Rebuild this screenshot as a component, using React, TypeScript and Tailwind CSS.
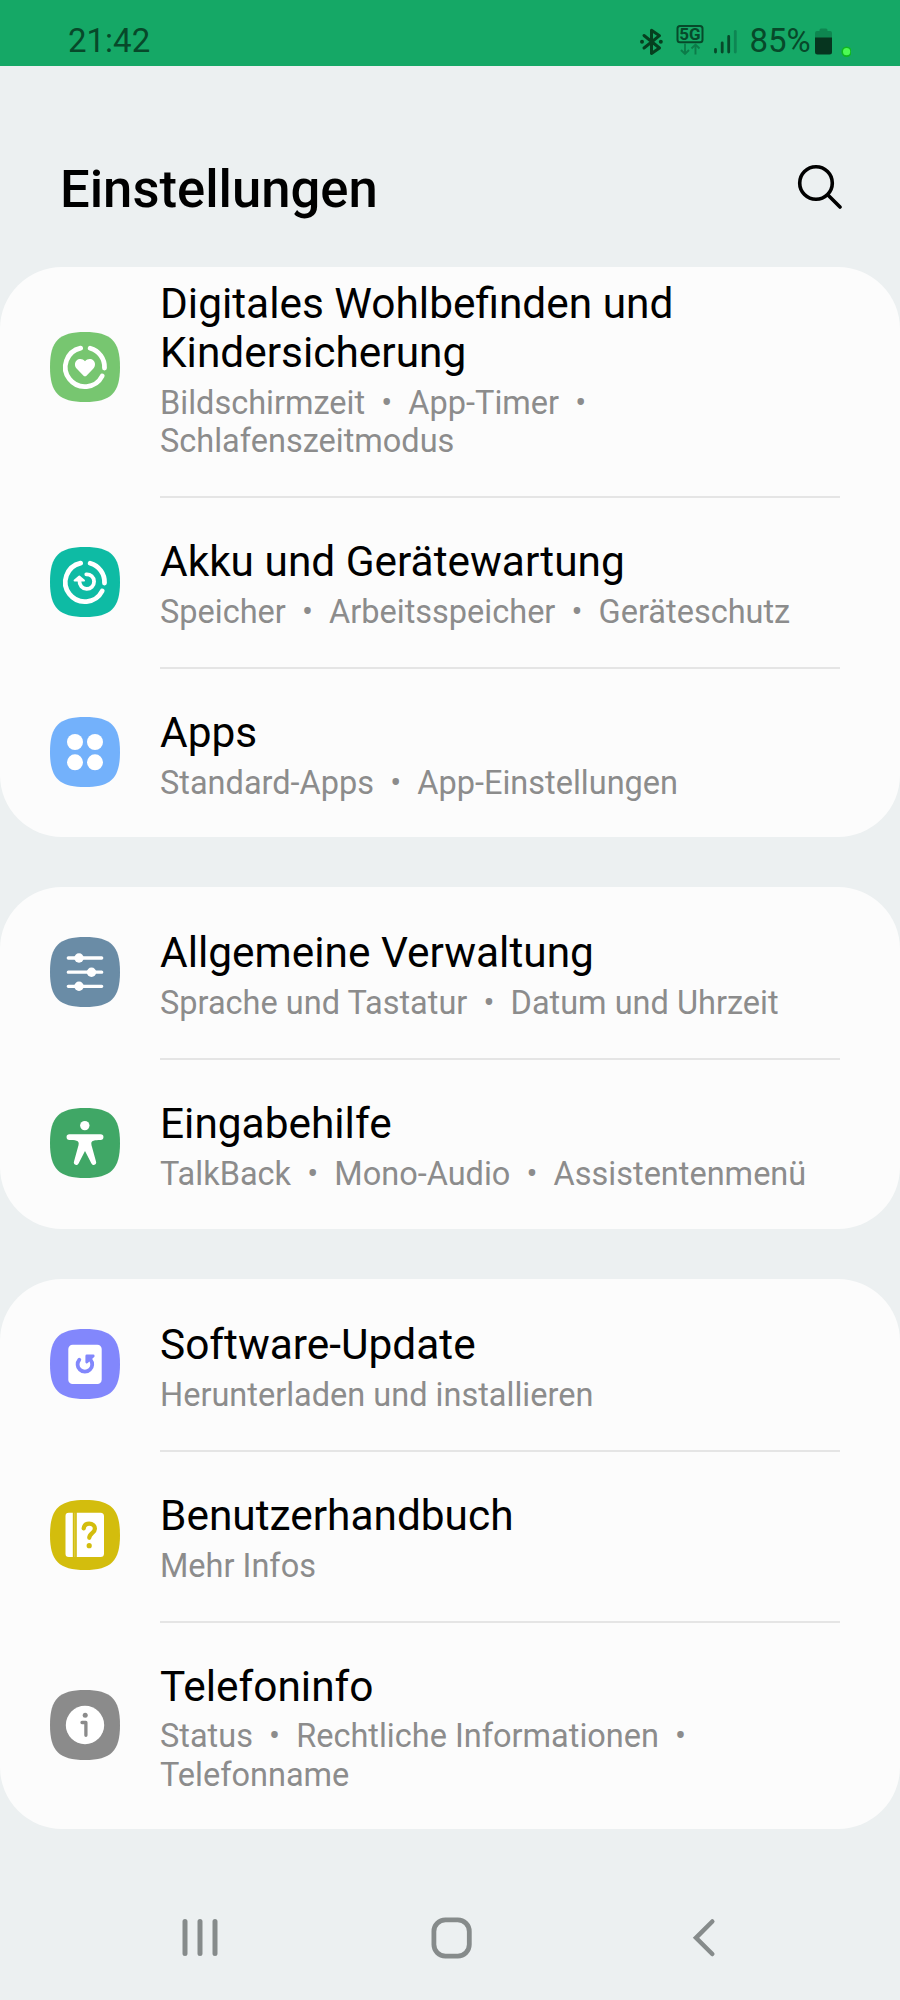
import type { ReactNode } from "react";

type Item = {
  title: string;
  details: string[];
  color: string;
  icon: ReactNode;
};

type Group = {
  className: string;
  items: Item[];
};

const SEPARATOR = "\u00a0\u00a0•\u00a0 ";

const RingIcon = () => (
  <g fill="none" stroke="#fff" strokeWidth="4.8" strokeLinecap="round">
    <path d="M30.6 16.1A19.5 19.5 0 1 0 52.2 44" />
    <path d="M40.2 16.2A19.5 19.5 0 0 1 54.5 36" />
  </g>
);

const groups: Group[] = [
  {
    className: "h-[570px] pt-[12px]",
    items: [
      {
        title: "Digitales Wohlbefinden und Kindersicherung",
        details: ["Bildschirmzeit", "App-Timer", "Schlafenszeitmodus"],
        color: "#77c670",
        icon: (
          <>
            <RingIcon />
            <path
              d="M35 44.3c-.7 0-1.2-.4-1.7-.9l-6.5-6.6c-2.5-2.6-2.3-6.3-.2-8.3 2.3-2.2 6.2-1.9 8.4.8 2.2-2.7 6.1-3 8.4-.8 2.1 2 2.3 5.7-.2 8.3l-6.5 6.6c-.5.5-1 .9-1.7.9z"
              fill="#fff"
            />
          </>
        ),
      },
      {
        title: "Akku und Gerätewartung",
        details: ["Speicher", "Arbeitsspeicher", "Geräteschutz"],
        color: "#0ebba4",
        icon: (
          <>
            <RingIcon />
            <path d="M36.3 27.3A7.3 7.3 0 1 1 29.5 34" fill="none" stroke="#fff" strokeWidth="3.8" strokeLinecap="round" />
            <path d="M29.3 29.5l4.7 4h-9.4z" fill="#fff" stroke="#fff" strokeWidth="2" strokeLinejoin="round" />
          </>
        ),
      },
      {
        title: "Apps",
        details: ["Standard-Apps", "App-Einstellungen"],
        color: "#73b1fb",
        icon: (
          <g fill="#fff">
            <circle cx="25" cy="25" r="8" />
            <circle cx="45" cy="25" r="8" />
            <circle cx="25" cy="45.3" r="8" />
            <circle cx="45" cy="45.3" r="8" />
          </g>
        ),
      },
    ],
  },
  {
    className: "h-[342px] pt-[41px]",
    items: [
      {
        title: "Allgemeine Verwaltung",
        details: ["Sprache und Tastatur", "Datum und Uhrzeit"],
        color: "#6a8ca6",
        icon: (
          <>
            <path d="M18.3 21h33.4M18.3 35.2h33.4M18.3 49.3h33.4" stroke="#fff" strokeWidth="3.3" strokeLinecap="round" />
            <g fill="#fff">
              <circle cx="29" cy="21" r="4.7" />
              <circle cx="41.5" cy="35.2" r="4.7" />
              <circle cx="29" cy="49.3" r="4.7" />
            </g>
          </>
        ),
      },
      {
        title: "Eingabehilfe",
        details: ["TalkBack", "Mono-Audio", "Assistentenmenü"],
        color: "#40a766",
        icon: (
          <g fill="#fff">
            <circle cx="34.8" cy="17.6" r="4.7" />
            <path d="M19.4 26.2h31.2a2.85 2.85 0 0 1 0 5.7c-6 0-9.3.7-9.3 3.3 0 1.3.3 2.5.7 3.8l4 14.6a2.5 2.5 0 0 1-4.7 1.7L35 43l-6.3 12.3a2.5 2.5 0 0 1-4.7-1.7L28 39c.4-1.3.7-2.5.7-3.8 0-2.6-3.3-3.3-9.3-3.3a2.85 2.85 0 0 1 0-5.7z" />
          </g>
        ),
      },
    ],
  },
  {
    className: "h-[550px] pt-[41px]",
    items: [
      {
        title: "Software-Update",
        details: ["Herunterladen und installieren"],
        color: "#8287fc",
        icon: (
          <>
            <rect x="18.3" y="15.7" width="33.4" height="39.3" rx="4.3" fill="#fff" />
            <path d="M29.3 30.7A7.3 7.3 0 1 0 40.5 30.7" fill="none" stroke="#8287fc" strokeWidth="3.8" strokeLinecap="round" />
            <path d="M36.8 33V26.9h6.4z" fill="#8287fc" stroke="#8287fc" strokeWidth="2.8" strokeLinejoin="round" />
          </>
        ),
      },
      {
        title: "Benutzerhandbuch",
        details: ["Mehr Infos"],
        color: "#d3bd0d",
        icon: (
          <>
            <path d="M18.8 12.7h4V57h-4a3.3 3.3 0 0 1-3.3-3.3V16a3.3 3.3 0 0 1 3.3-3.3zM26.8 12.7h23.7A3.5 3.5 0 0 1 54 16.2v37.3a3.5 3.5 0 0 1-3.5 3.5H26.8z" fill="#fff" />
            <path d="M24.8 12.7V57" stroke="#fff" strokeOpacity=".35" strokeWidth=".8" />
            <path d="M33.7 28.3c.5-2.9 2.5-4.6 5.5-4.6 3.3 0 5.7 2.1 5.7 5 0 4.3-5.6 4.6-5.6 9.1" fill="none" stroke="#d3bd0d" strokeWidth="4.3" strokeLinecap="round" />
            <circle cx="39.2" cy="45.7" r="2.6" fill="#d3bd0d" />
          </>
        ),
      },
      {
        title: "Telefoninfo",
        details: ["Status", "Rechtliche Informationen", "Telefonname"],
        color: "#8b8b8b",
        icon: (
          <>
            <circle cx="35" cy="35" r="19.2" fill="#fff" />
            <circle cx="35.2" cy="25.2" r="2.5" fill="#8b8b8b" />
            <path d="M32 32.5h3.9v12.8" fill="none" stroke="#8b8b8b" strokeWidth="3.3" strokeLinecap="round" strokeLinejoin="round" />
          </>
        ),
      },
    ],
  },
];

export default function App() {
  return (
    <div className="flex h-[2000px] w-[900px] flex-col overflow-hidden bg-[#ecf0f1] font-['Roboto',sans-serif] text-black">
      <StatusBar />

      <header className="flex h-[201px] items-center justify-between pt-[43px] pr-[58px] pl-[60px]">
        <h1 className="pt-[2px] text-[52.6px] leading-[62px] font-medium">Einstellungen</h1>
        <button type="button" aria-label="Suchen" className="mb-1">
          <svg width="46" height="46" viewBox="0 0 46 46" fill="none" stroke="#000" strokeWidth="3.6" strokeLinecap="round">
            <circle cx="20" cy="20" r="16.3" />
            <path d="M32.2 32.2L44 44" />
          </svg>
        </button>
      </header>

      <main className="flex flex-col gap-[50px]">
        {groups.map((group) => (
          <section key={group.items[0].title} className={`rounded-[62px] bg-[#fcfcfc] ${group.className}`}>
            {group.items.map((item, i) => (
              <SettingsRow key={item.title} item={item} last={i === group.items.length - 1} />
            ))}
          </section>
        ))}
      </main>

      <NavBar />
    </div>
  );
}

function SettingsRow({ item, last }: { item: Item; last: boolean }) {
  return (
    <div className="flex pr-[60px] pl-[50px]">
      <div className={`flex w-[110px] flex-none items-center ${last ? "" : "mb-[77px]"}`}>
        <svg width="70" height="70" viewBox="0 0 70 70" className="-mt-[5.5px]">
          <path d="M35 0C61 0 70 9 70 35S61 70 35 70 0 61 0 35 9 0 35 0z" fill={item.color} />
          {item.icon}
        </svg>
      </div>
      <div className={`flex-1 ${last ? "" : "mb-[39px] border-b-2 border-[#e5e5e5] pb-[35.7px]"}`}>
        <div className="text-[42.4px] leading-[49.3px]">{item.title}</div>
        <div className="mt-[6.5px] text-[32.5px] leading-[38.3px] text-[#8c8c8c]">{item.details.join(SEPARATOR)}</div>
      </div>
    </div>
  );
}

function StatusBar() {
  return (
    <div className="flex h-[66px] items-start justify-between bg-[#15a866] pt-[21px] pr-[49px] pl-[68px] text-[33px] leading-[39px] text-[#07492a]">
      <span>21:42</span>
      <svg width="215" height="40" viewBox="636 21 215 40">
        {/* bluetooth */}
        <path d="M644 35.5L659.5 48l-8 5.5V30.2l8 5.5L644 48" fill="none" stroke="#06401f" strokeWidth="3" strokeLinejoin="round" strokeLinecap="round" />
        <circle cx="642" cy="41.8" r="2" fill="#06401f" />
        <circle cx="660.8" cy="41.8" r="2" fill="#06401f" />
        {/* network */}
        <rect x="677.5" y="25.9" width="25" height="16.4" rx="2.5" fill="none" stroke="#07492a" strokeWidth="2" />
        <text x="690" y="40.2" fontSize="17" fontWeight="700" textAnchor="middle" fill="#07492a">5G</text>
        <path d="M685 43.5V54m-4-4l4 4 4-4M695.5 54.500v-10m-4 4l4-4 4 4" fill="none" stroke="#0c7c49" strokeWidth="1.9" />
        {/* signal */}
        <path d="M715.5 49.5V52M722.2 42.8V52M728.7 36.5V52" stroke="#07492a" strokeWidth="2.8" strokeLinecap="round" />
        <path d="M735.3 31.5V52" stroke="#0e8653" strokeWidth="2.8" strokeLinecap="round" />
        <text x="749.5" y="52.3" fontSize="33" fill="#07492a">85%</text>
        {/* battery */}
        <path d="M815 38v-5q0-2 2-2h2.500v-1q0-1.500 1.500-1.500h5q1.500 0 1.500 1.500v1h2.500q2 0 2 2v5z" fill="#0e8650" />
        <path d="M815 37.500h17V52q0 2.500-2.500 2.500h-12q-2.500 0-2.500-2.500z" fill="#06351f" />
        <circle cx="846.600" cy="51.700" r="4.400" fill="#4dfa55" stroke="#10b81f" strokeWidth="1.600" />
      </svg>
    </div>
  );
}

function NavBar() {
  return (
    <nav className="mt-[88px] flex h-[42px] items-center pl-[181px]">
      <button type="button" aria-label="Letzte Apps">
        <svg width="38" height="42" viewBox="0 0 38 42" stroke="#868b8b" strokeWidth="5" strokeLinecap="round">
          <path d="M4 4.5v32M19 4.5v32M34 4.5v32" />
        </svg>
      </button>
      <button type="button" aria-label="Startseite" className="ml-[212px]">
        <svg width="41" height="42" viewBox="0 0 41 42" fill="none" stroke="#868b8b" strokeWidth="4.8">
          <rect x="2.9" y="2.9" width="35.4" height="36.2" rx="11.5" />
        </svg>
      </button>
      <button type="button" aria-label="Zurück" className="ml-[220px]">
        <svg width="24" height="42" viewBox="0 0 24 42" fill="none" stroke="#868b8b" strokeWidth="4.5" strokeLinecap="round">
          <path d="M20.3 4.5L4 20.8 20.3 37" />
        </svg>
      </button>
    </nav>
  );
}
